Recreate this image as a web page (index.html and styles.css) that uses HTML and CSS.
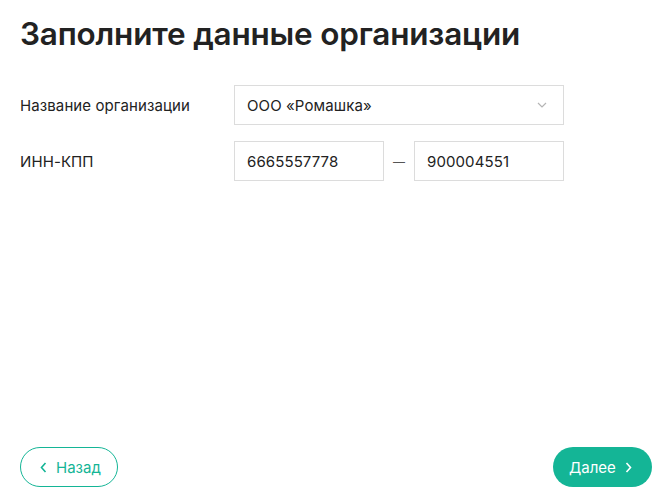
FILE: index.html
```html
<!DOCTYPE html>
<html lang="ru">
<head>
    <meta charset="UTF-8">
    <meta name="viewport" content="width=device-width, initial-scale=1.0">
    <title>Данные организации</title>
    <link rel="stylesheet" href="styles.css">
</head>
<body>
    <div class="page">
        <h1 class="title">Заполните данные организации</h1>

        <!-- Форма -->
        <div class="form">
            <div class="form-row">
                <label class="form-label">Название организации</label>
                <div class="select">
                    <span>ООО «Ромашка»</span>
                    <svg class="select-arrow" width="10" height="6" viewBox="0 0 10 6">
                        <path d="M1 1l4 4 4-4" fill="none" stroke="#b5b5b5" stroke-width="1.2"/>
                    </svg>
                </div>
            </div>
            <div class="form-row">
                <label class="form-label">ИНН-КПП</label>
                <div class="pair">
                    <input class="input" type="text" value="6665557778">
                    <span class="dash">—</span>
                    <input class="input" type="text" value="900004551">
                </div>
            </div>
        </div>

        <!-- Кнопки -->
        <div class="footer">
            <button class="btn btn-back">
                <svg width="7" height="11" viewBox="0 0 7 11">
                    <path d="M5.5 1L1.5 5.5l4 4.5" fill="none" stroke="currentColor" stroke-width="1.6"/>
                </svg>
                Назад
            </button>
            <button class="btn btn-next">
                Далее
                <svg width="7" height="11" viewBox="0 0 7 11">
                    <path d="M1.5 1l4 4.5-4 4.5" fill="none" stroke="currentColor" stroke-width="1.6"/>
                </svg>
            </button>
        </div>
    </div>
</body>
</html>
```

FILE: styles.css
```css
* {
    box-sizing: border-box;
}

body {
    margin: 0;
    font-family: Inter, "Noto Sans", sans-serif;
    color: #222;
    background: #fff;
}

.page {
    display: flex;
    flex-direction: column;
    min-height: 499px;
    padding: 14px 12px 12px 20px;
}

.title {
    margin: 0;
    font-size: 31.5px;
    line-height: 40px;
    font-weight: 600;
    letter-spacing: -0.2px;
    color: #222;
}

.form {
    margin-top: 31px;
    display: flex;
    flex-direction: column;
    gap: 16px;
}

.form-row {
    display: flex;
    align-items: center;
}

.form-label {
    width: 214px;
    font-size: 15px;
    letter-spacing: 0.1px;
    color: #222;
}

.select {
    width: 330px;
    height: 40px;
    border: 1px solid #dcdcdc;
    display: flex;
    align-items: center;
    justify-content: space-between;
    padding: 0 16px 0 12px;
    font-size: 15px;
    letter-spacing: 0.1px;
}

.pair {
    display: flex;
    align-items: center;
}

.input {
    width: 150px;
    height: 40px;
    border: 1px solid #dcdcdc;
    padding: 0 12px;
    font-family: inherit;
    font-size: 15px;
    letter-spacing: 0.1px;
    color: #222;
    outline: none;
}

.dash {
    width: 30px;
    text-align: center;
    font-size: 12px;
    color: #555;
}

.footer {
    margin-top: auto;
    display: flex;
    justify-content: space-between;
}

.btn {
    height: 40px;
    border-radius: 20px;
    display: flex;
    align-items: center;
    gap: 9px;
    font-family: inherit;
    font-size: 15px;
    cursor: pointer;
}

.btn-back {
    width: 98px;
    padding: 0 0 0 19px;
    border: 1px solid #14b596;
    background: #fff;
    color: #14b596;
}

.btn-next {
    width: 99px;
    padding: 0 0 0 16px;
    border: none;
    background: #14b596;
    color: #fff;
}
```
